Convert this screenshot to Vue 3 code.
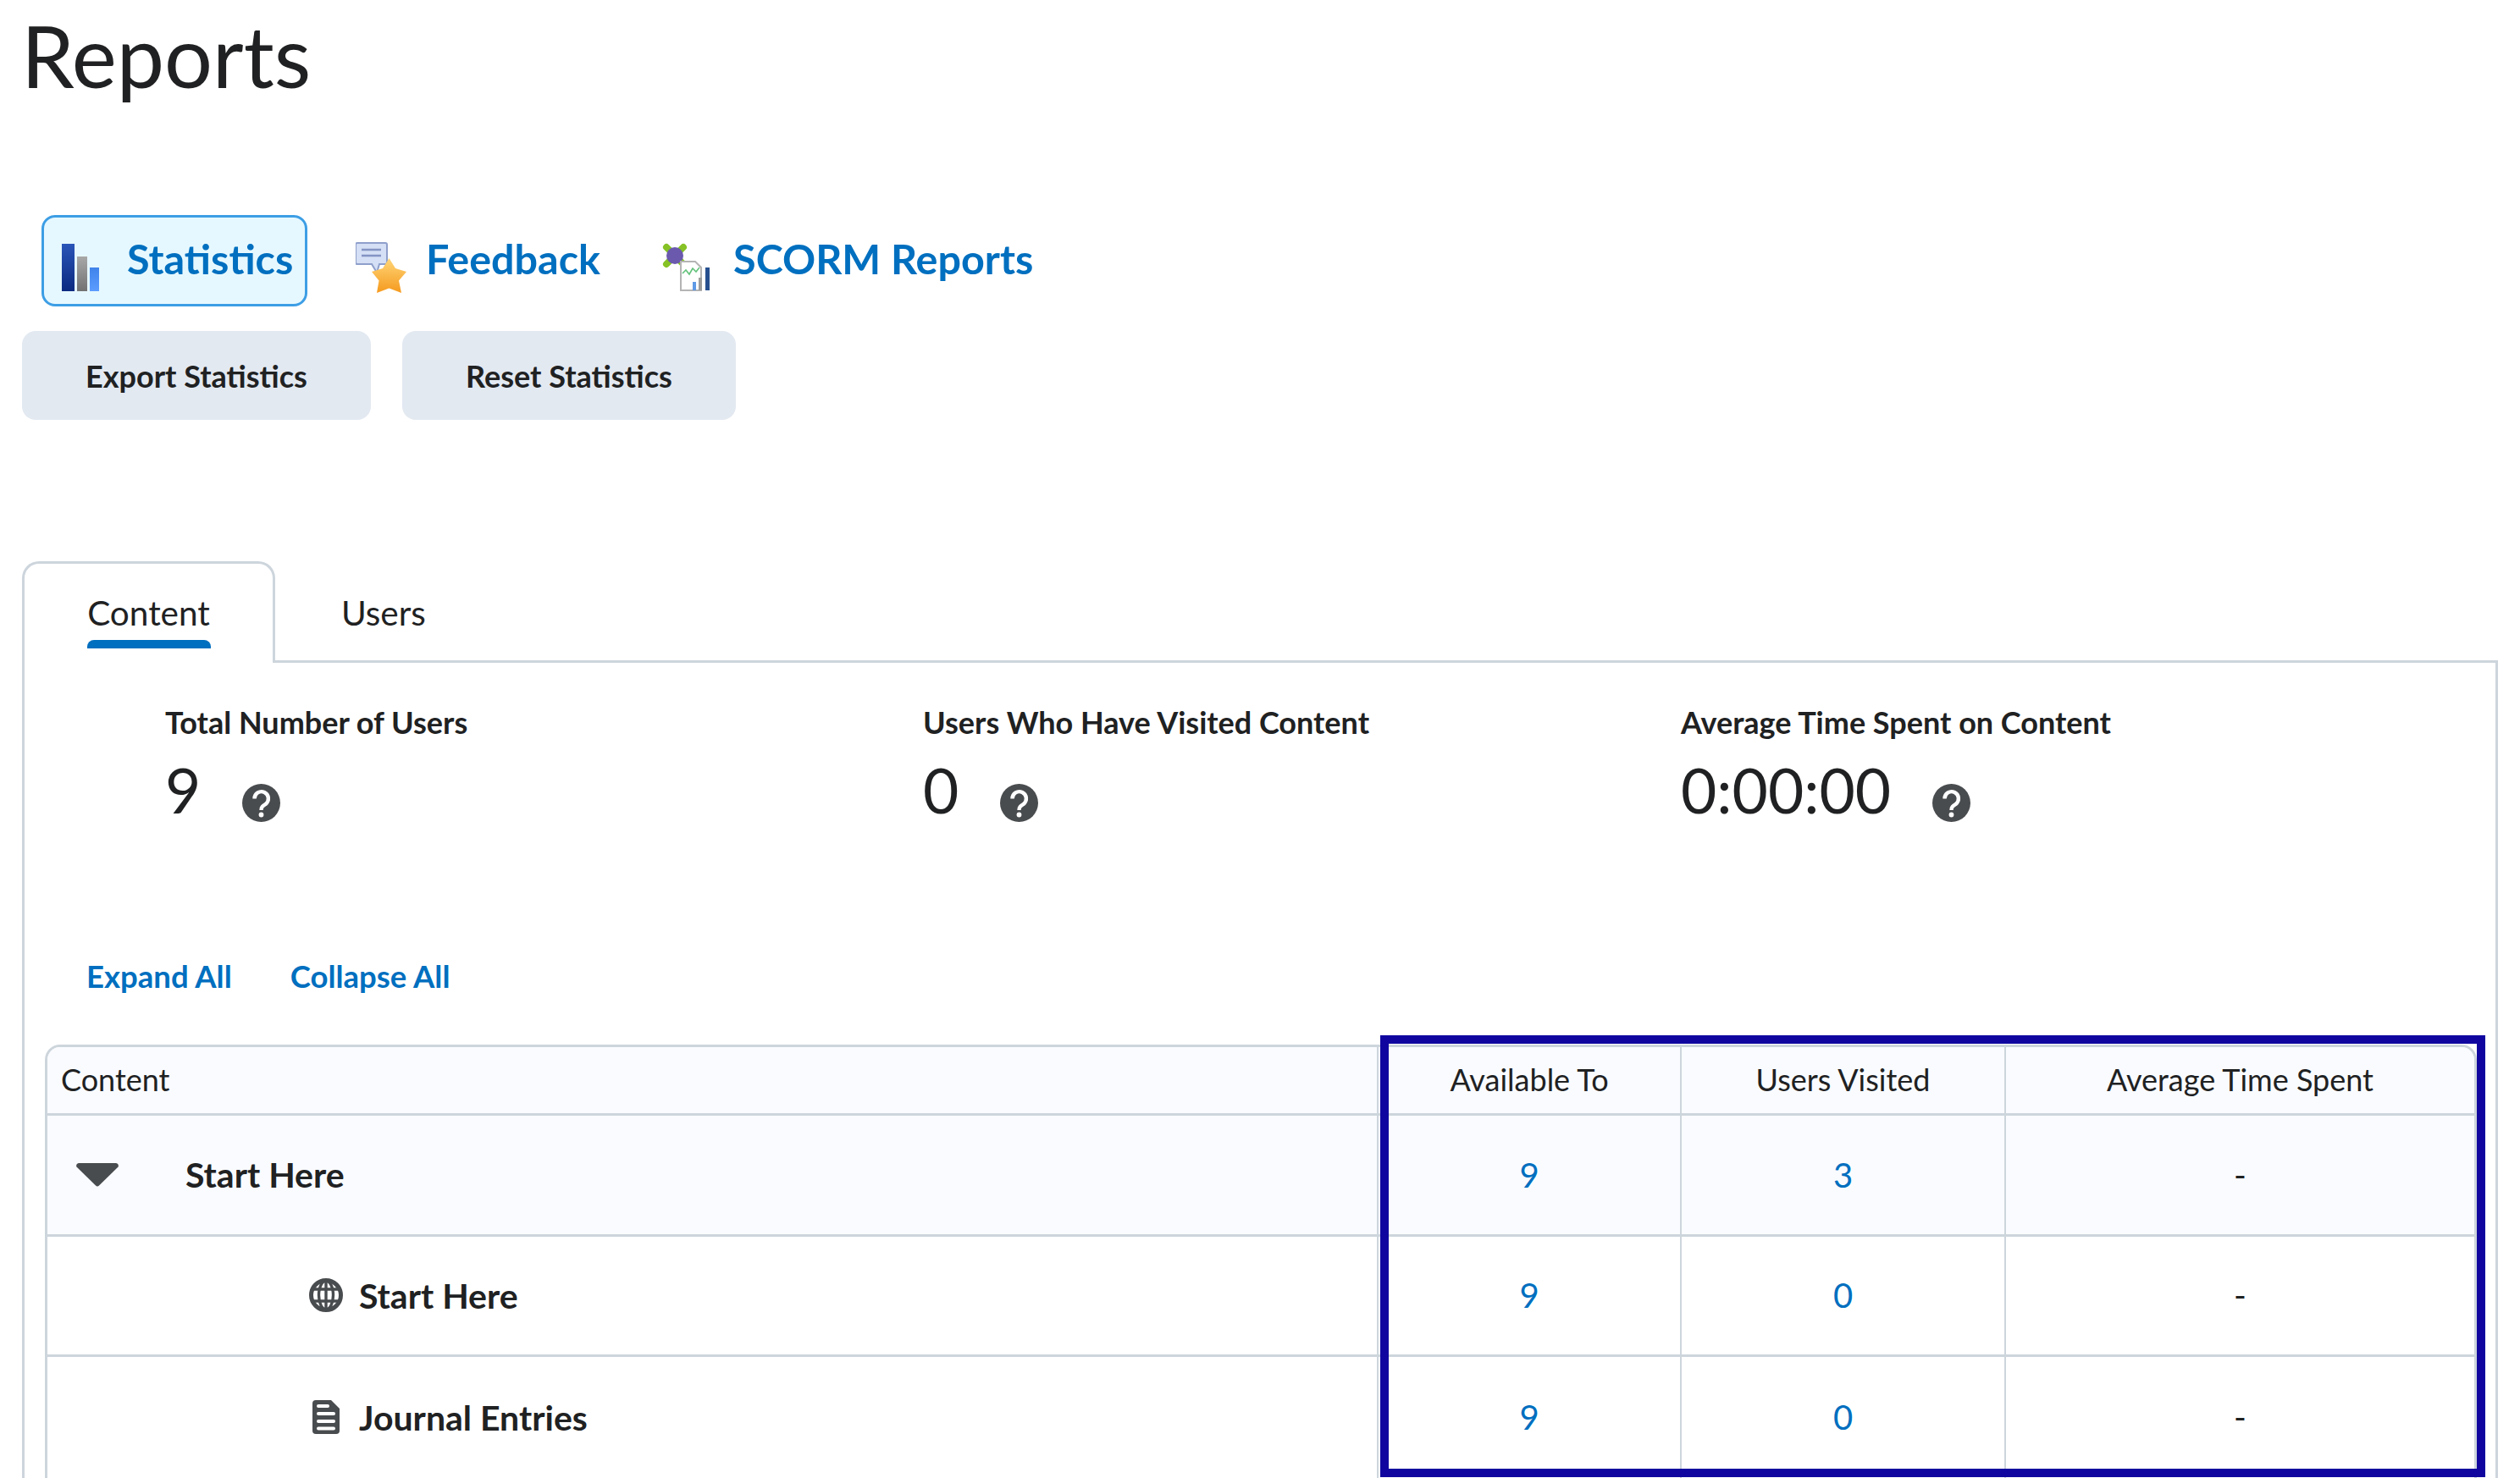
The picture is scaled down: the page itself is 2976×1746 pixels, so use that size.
<template>
  <div class="page">
    <h1 class="title">Reports</h1>

    <nav class="report-nav">
      <a class="report-link active">
        <svg class="ico-stat" viewBox="0 0 44 56">
          <defs>
            <linearGradient id="barA" x1="0" y1="0" x2="0" y2="1"><stop offset="0" stop-color="#2a55b8"/><stop offset="1" stop-color="#0b2a80"/></linearGradient>
            <linearGradient id="barB" x1="0" y1="0" x2="0" y2="1"><stop offset="0" stop-color="#a8a8a8"/><stop offset="1" stop-color="#727272"/></linearGradient>
            <linearGradient id="barC" x1="0" y1="0" x2="0" y2="1"><stop offset="0" stop-color="#3f83ea"/><stop offset="1" stop-color="#5c9cff"/></linearGradient>
          </defs>
          <rect x="0" y="0" width="15" height="56" fill="url(#barA)"/>
          <rect x="18" y="15" width="12" height="41" fill="url(#barB)"/>
          <rect x="33" y="28" width="11" height="28" fill="url(#barC)"/>
        </svg>
        <span>Statistics</span>
      </a>
      <a class="report-link feedback">
        <svg class="ico-fb" viewBox="0 0 60 60">
          <defs>
            <linearGradient id="starG" x1="0" y1="0" x2="0" y2="1"><stop offset="0" stop-color="#ffd678"/><stop offset="1" stop-color="#f59a1e"/></linearGradient>
          </defs>
          <path d="M2 1H35a2 2 0 0 1 2 2V24a2 2 0 0 1-2 2H28L25 36 19 26H2a2 2 0 0 1-2-2V3a2 2 0 0 1 2-2Z" fill="#d5dff5" stroke="#8e9fcb" stroke-width="2"/>
          <path d="M7 9H30M7 16H30" stroke="#8494c4" stroke-width="2.5"/>
          <path d="M39.500 19 47 31 60 35 51 45.500 54 60 39.500 54.500 25 60 27.500 45.500 19 35 32 31Z" fill="url(#starG)"/>
        </svg>
        <span>Feedback</span>
      </a>
      <a class="report-link scorm">
        <svg class="ico-sc" viewBox="0 0 58 58">
          <path d="M5 5 25 25M25 5 5 25" stroke="#86c225" stroke-width="8" stroke-linecap="round"/>
          <circle cx="15" cy="15" r="10" fill="#6a59ad"/>
          <path d="M22 22H39L46 29V56H22Z" fill="#fff" stroke="#b4b4b4" stroke-width="2"/>
          <path d="M24 36 28 32 32 37 36 30 40 34 44 29" fill="none" stroke="#62c27a" stroke-width="1.6"/>
          <rect x="36" y="46" width="4" height="10" fill="#5f9ae6"/>
          <rect x="43" y="41" width="4" height="15" fill="#9c9c9c"/>
          <rect x="51" y="29" width="5" height="27" fill="#27508f"/>
        </svg>
        <span>SCORM Reports</span>
      </a>
    </nav>

    <div class="actions">
      <button class="btn export">Export Statistics</button>
      <button class="btn reset">Reset Statistics</button>
    </div>

    <div class="tabs">
      <div class="tab current">
        <span>Content</span>
        <i class="tab-bar"></i>
      </div>
      <div class="tab other"><span>Users</span></div>
    </div>

    <section class="panel">
      <div class="stats">
        <div v-for="s in stats" :key="s.label" class="stat">
          <div class="stat-label">{{ s.label }}</div>
          <div class="stat-value">
            <span>{{ s.value }}</span>
            <svg class="help" viewBox="0 0 45 45">
              <circle cx="22.5" cy="22.5" r="22.5" fill="#494c4e"/>
              <path d="M14.5 17.5a8.2 8.2 0 1 1 13.2 6.4c-3.6 2.5-5.2 3.4-5.2 7" fill="none" stroke="#fff" stroke-width="4.4"/>
              <circle cx="22.5" cy="36.5" r="2.9" fill="#fff"/>
            </svg>
          </div>
        </div>
      </div>

      <div class="links">
        <a>Expand All</a>
        <a>Collapse All</a>
      </div>

      <div class="table-wrap">
        <div class="grid head">
          <div class="cell first">Content</div>
          <div class="cell mid">Available To</div>
          <div class="cell mid">Users Visited</div>
          <div class="cell mid">Average Time Spent</div>
        </div>
        <div v-for="r in rows" :key="r.name + r.kind" class="grid row" :class="r.kind">
          <div class="cell first name">
            <svg v-if="r.kind === 'module'" class="ico-caret" viewBox="0 0 50 28">
              <path d="M3 0H47a3 3 0 0 1 2.5 4.4L27 26.500a3 3 0 0 1-4 0L.5 4.400A3 3 0 0 1 3 0Z" fill="#494c4e"/>
            </svg>
            <svg v-if="r.kind === 'web'" class="ico-globe" viewBox="0 0 40 40">
              <circle cx="20" cy="20" r="17.500" fill="#fff" stroke="#494c4e" stroke-width="5"/>
              <ellipse cx="20" cy="20" rx="8.500" ry="17" fill="none" stroke="#494c4e" stroke-width="3.400"/>
              <path d="M20 2V38M4 13H36M4 27H36" stroke="#494c4e" stroke-width="3.400"/>
            </svg>
            <svg v-if="r.kind === 'doc'" class="ico-doc" viewBox="0 0 32 40">
              <path d="M4 0H22L32 10V36a4 4 0 0 1-4 4H4a4 4 0 0 1-4-4V4a4 4 0 0 1 4-4Z" fill="#494c4e"/>
              <rect x="5" y="5" width="15" height="4" rx="2" fill="#fff"/>
              <rect x="5" y="14" width="22" height="4" rx="2" fill="#fff"/>
              <rect x="5" y="23" width="22" height="4" rx="2" fill="#fff"/>
              <rect x="5" y="31.500" width="22" height="4" rx="2" fill="#fff"/>
            </svg>
            <span>{{ r.name }}</span>
          </div>
          <div class="cell mid num">{{ r.available }}</div>
          <div class="cell mid num">{{ r.visited }}</div>
          <div class="cell mid dash">-</div>
        </div>
        <div class="highlight"></div>
      </div>
    </section>
  </div>
</template>

<script setup>
const stats = [
  { label: 'Total Number of Users', value: '9' },
  { label: 'Users Who Have Visited Content', value: '0' },
  { label: 'Average Time Spent on Content', value: '0:00:00' }
]
const rows = [
  { name: 'Start Here', kind: 'module', available: 9, visited: 3 },
  { name: 'Start Here', kind: 'web', available: 9, visited: 0 },
  { name: 'Journal Entries', kind: 'doc', available: 9, visited: 0 }
]
</script>

<style>
html, body { margin: 0; background: #fff; }
</style>

<style scoped>
.page {
  width: 2976px;
  height: 1746px;
  overflow: hidden;
  background: #fff;
  color: #202122;
  font-family: Lato, "Liberation Sans", sans-serif;
}
.title {
  margin: 0;
  height: 254px;
  padding-left: 25px;
  box-sizing: border-box;
  font-size: 100.5px;
  font-weight: 400;
  line-height: 130px;
}
.report-nav {
  display: flex;
  align-items: center;
  height: 108px;
  padding-left: 49px;
}
.report-link {
  display: flex;
  align-items: center;
  color: #006fbf;
  font-size: 48.5px;
  font-weight: 700;
  white-space: nowrap;
}
.report-link span { margin-bottom: 6px; }
.report-link svg { margin-top: 16px; }
.report-link.active {
  box-sizing: border-box;
  width: 314px;
  height: 108px;
  padding-left: 21px;
  gap: 33px;
  border: 3px solid #3d9ee5;
  border-radius: 16px;
  background: #e6f8ff;
}
.feedback { margin-left: 57px; gap: 23px; }
.scorm { margin-left: 73px; gap: 26px; }
.ico-stat { width: 44px; height: 56px; }
.ico-fb { width: 60px; height: 60px; }
.ico-sc { width: 58px; height: 58px; }
.actions {
  display: flex;
  gap: 37px;
  margin-top: 29px;
  padding-left: 26px;
}
.btn {
  height: 105px;
  border: 0;
  border-radius: 16px;
  background: #e3e9f1;
  color: #202122;
  font-family: inherit;
  font-size: 36px;
  font-weight: 700;
}
.export { width: 412px; }
.reset { width: 394px; }
.tabs {
  display: flex;
  width: 2950px;
  height: 120px;
  margin-top: 167px;
  font-size: 40.5px;
}
.tab { box-sizing: border-box; height: 120px; }
.tab.current {
  display: flex;
  flex-direction: column;
  align-items: center;
  width: 299px;
  margin-left: 26px;
  padding-top: 33px;
  border: 3px solid #cdd5dc;
  border-bottom: 0;
  border-radius: 20px 20px 0 0;
  background: #fff;
}
.tab.current span { line-height: 50px; }
.tab-bar {
  width: 146px;
  height: 10px;
  margin-top: 7px;
  border-radius: 8px 8px 0 0;
  background: #006fbf;
}
.tab.other {
  flex: 1;
  padding: 36px 0 0 78px;
  line-height: 50px;
  border-bottom: 3px solid #cdd5dc;
}
.panel {
  box-sizing: border-box;
  width: 2924px;
  height: 1000px;
  margin-left: 26px;
  border-left: 3px solid #cdd5dc;
  border-right: 3px solid #cdd5dc;
}
.stats {
  display: grid;
  grid-template-columns: repeat(3, 895px);
  padding: 48px 0 0 166px;
}
.stat-label {
  font-size: 36px;
  font-weight: 700;
  line-height: 44px;
}
.stat-value {
  display: flex;
  align-items: flex-start;
  gap: 49px;
  height: 105px;
  margin-top: 13px;
  font-size: 73px;
  line-height: 90px;
}
.help { width: 45px; height: 45px; margin-top: 38px; }
.links {
  display: flex;
  gap: 69px;
  margin-top: 138px;
  padding-left: 73px;
  color: #006fbf;
  font-size: 36.5px;
  font-weight: 700;
  line-height: 44px;
}
.table-wrap {
  position: relative;
  box-sizing: border-box;
  width: 2872px;
  margin: 59px 0 0 24px;
  border: 3px solid #cdd5dc;
  border-bottom: 0;
  border-radius: 18px 18px 0 0;
}
.grid {
  display: grid;
  grid-template-columns: 1570px 358px 383px 555px;
  border-bottom: 3px solid #cdd5dc;
}
.head {
  box-sizing: border-box;
  height: 81px;
  background: #f9fbff;
  border-radius: 15px 15px 0 0;
  font-size: 36px;
}
.head .cell { padding-bottom: 2px; }
.row { box-sizing: border-box; height: 142.5px; }
.row.module { background: #f9fbff; }
.row.doc { border-bottom: 0; }
.cell {
  display: flex;
  align-items: center;
  min-width: 0;
}
.cell.first { padding-left: 16px; }
.cell.mid {
  justify-content: center;
  border-left: 2px solid #cdd5dc;
}
.name { font-size: 41px; font-weight: 700; }
.num { color: #006fbf; font-size: 40px; }
.dash { font-size: 40px; }
.module .name { padding-left: 34px; gap: 79px; }
.web .name { padding-left: 309px; gap: 19px; }
.doc .name { padding-left: 313px; gap: 23px; }
.ico-caret { width: 50px; height: 28px; }
.ico-globe { width: 40px; height: 40px; }
.ico-doc { width: 32px; height: 40px; }
.highlight {
  position: absolute;
  left: 1574px;
  top: -14px;
  box-sizing: border-box;
  width: 1305px;
  height: 522px;
  border: 10px solid #10069f;
}
</style>
